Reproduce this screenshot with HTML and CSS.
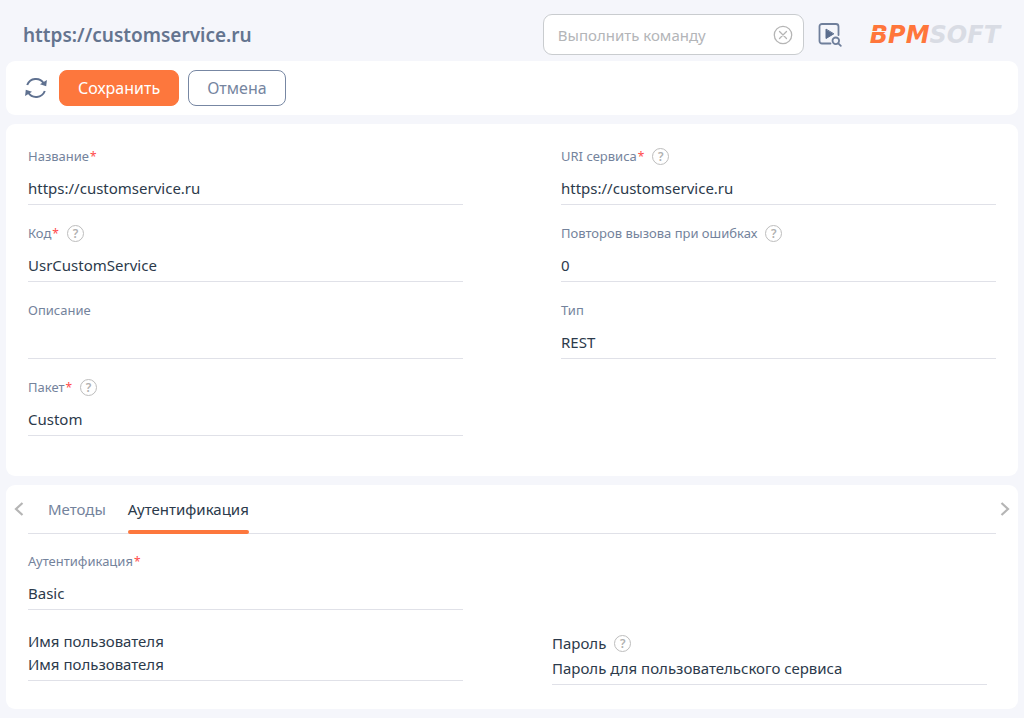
FILE: index.html
```html
<!DOCTYPE html>
<html lang="ru">
<head>
    <meta charset="UTF-8">
    <meta name="viewport" content="width=device-width, initial-scale=1.0">
    <title>https://customservice.ru</title>
    <link rel="stylesheet" href="styles.css">
</head>
<body>
    <header class="header">
        <h1 class="page-title">https://customservice.ru</h1>
        <div class="command">
            <input type="text" class="command-input" placeholder="Выполнить команду" aria-label="Выполнить команду">
            <button type="button" class="icon-button" aria-label="Очистить">
                <svg width="20" height="20" viewBox="0 0 20 20" fill="none" stroke="#b5b5b5" stroke-width="1.3" stroke-linecap="round">
                    <circle cx="10" cy="10" r="8.7"/>
                    <path d="M6.5 6.5l7 7M13.5 6.5l-7 7"/>
                </svg>
            </button>
        </div>
        <button type="button" class="icon-button run-button" aria-label="Запустить процесс">
            <svg width="24" height="24" viewBox="0 0 24 24" fill="none" stroke="#6f7f9b" stroke-width="1.8" stroke-linecap="round">
                <path d="M12.5 20.5H4A2.500 2.500 0 0 1 1.500 18V3.500A2.500 2.500 0 0 1 4 1H18a2.500 2.500 0 0 1 2.500 2.500V12"/>
                <path d="M8 6.500v9l7.500-4.500z" fill="#5b6d8d" stroke="#5b6d8d" stroke-width="1" stroke-linejoin="round"/>
                <circle cx="17.800" cy="17.800" r="3.300"/>
                <path d="M20.300 20.300l2.500 2.500"/>
            </svg>
        </button>
        <a href="#" class="logo"><span class="logo-bpm">BPM</span><span class="logo-soft">SOFT</span></a>
    </header>

    <main class="content">
        <div class="card toolbar">
            <button type="button" class="icon-button" aria-label="Обновить">
                <svg width="22" height="22" viewBox="0 0 22 22" fill="none" stroke="#5f7190" stroke-width="2">
                    <path d="M2.200 8A9.300 9.300 0 0 1 18.800 6.500"/>
                    <path d="M19.800 14A9.300 9.300 0 0 1 3.200 15.500"/>
                    <path d="M21.900 3l-.7 6.300-6.200-2z" fill="#5f7190" stroke="none"/>
                    <path d="M.1 19l.7-6.300 6.200 2z" fill="#5f7190" stroke="none"/>
                </svg>
            </button>
            <button type="button" class="btn btn-primary">Сохранить</button>
            <button type="button" class="btn">Отмена</button>
        </div>

        <section class="card main-card">
            <div class="fields">
                <div class="field">
                    <div class="field-head"><label for="name">Название<span class="required">*</span></label></div>
                    <input type="text" id="name" value="https://customservice.ru">
                </div>
                <div class="field">
                    <div class="field-head">
                        <label for="uri">URI сервиса<span class="required">*</span></label>
                        <button type="button" class="help" aria-label="Подсказка">?</button>
                    </div>
                    <input type="text" id="uri" value="https://customservice.ru">
                </div>
                <div class="field">
                    <div class="field-head">
                        <label for="code">Код<span class="required">*</span></label>
                        <button type="button" class="help" aria-label="Подсказка">?</button>
                    </div>
                    <input type="text" id="code" value="UsrCustomService">
                </div>
                <div class="field">
                    <div class="field-head">
                        <label for="retries">Повторов вызова при ошибках</label>
                        <button type="button" class="help" aria-label="Подсказка">?</button>
                    </div>
                    <input type="text" id="retries" value="0">
                </div>
                <div class="field">
                    <div class="field-head"><label for="description">Описание</label></div>
                    <input type="text" id="description">
                </div>
                <div class="field">
                    <div class="field-head"><label for="type">Тип</label></div>
                    <input type="text" id="type" value="REST">
                </div>
                <div class="field">
                    <div class="field-head">
                        <label for="package">Пакет<span class="required">*</span></label>
                        <button type="button" class="help" aria-label="Подсказка">?</button>
                    </div>
                    <input type="text" id="package" value="Custom">
                </div>
            </div>
        </section>

        <section class="card tabs-card">
            <nav class="tabs">
                <button type="button" class="icon-button tabs-arrow" aria-label="Назад">
                    <svg width="10" height="14" viewBox="0 0 10 14" fill="none" stroke="#b5b5b5" stroke-width="2.200"><path d="M8.500 1L2 7l6.500 6"/></svg>
                </button>
                <div class="tab-list">
                    <button type="button" class="tab">Методы</button>
                    <button type="button" class="tab active">Аутентификация</button>
                </div>
                <button type="button" class="icon-button tabs-arrow next" aria-label="Вперёд">
                    <svg width="10" height="14" viewBox="0 0 10 14" fill="none" stroke="#b5b5b5" stroke-width="2.200"><path d="M1.500 1L8 7l-6.500 6"/></svg>
                </button>
            </nav>
            <div class="fields auth-fields">
                <div class="field">
                    <div class="field-head"><label for="auth">Аутентификация<span class="required">*</span></label></div>
                    <input type="text" id="auth" value="Basic">
                </div>
            </div>
            <div class="fields credentials">
                <div class="field compact">
                    <div class="field-head"><label for="user">Имя пользователя</label></div>
                    <input type="text" id="user" value="Имя пользователя">
                </div>
                <div class="field compact password">
                    <div class="field-head">
                        <label for="password">Пароль</label>
                        <button type="button" class="help" aria-label="Подсказка">?</button>
                    </div>
                    <input type="text" id="password" value="Пароль для пользовательского сервиса">
                </div>
            </div>
        </section>
    </main>
</body>
</html>
```
FILE: styles.css
```css
* {
    box-sizing: border-box;
}

body {
    margin: 0;
    background: #f5f6fb;
    color: #2c3a4b;
    font-family: "Noto Sans", "Open Sans", sans-serif;
    font-size: 15px;
}

button, input {
    font-family: inherit;
    font-size: inherit;
    color: inherit;
}

button {
    cursor: pointer;
}

.header {
    display: flex;
    align-items: center;
    padding: 14px 24px 6px 23px;
}

.page-title {
    flex: 1;
    margin: 0;
    font-size: 19px;
    line-height: 28px;
    font-weight: 600;
    color: #64748f;
}

.command {
    display: flex;
    align-items: center;
    width: 261px;
    height: 41px;
    padding: 0 10px 0 14px;
    background: #fff;
    border: 1px solid #c9cccf;
    border-radius: 9px;
}

.command-input {
    flex: 1;
    min-width: 0;
    padding: 0;
    border: none;
    outline: none;
    background: none;
}

.command-input::placeholder {
    color: #b3b5b8;
    opacity: 1;
}

.icon-button {
    display: flex;
    align-items: center;
    justify-content: center;
    padding: 0;
    border: none;
    background: none;
}

.run-button {
    margin: 0 28px 0 14px;
}

.logo {
    position: relative;
    font-family: "DejaVu Sans", sans-serif;
    font-size: 24px;
    line-height: 24px;
    font-weight: bold;
    font-style: italic;
    text-decoration: none;
}

/* slit through the B */
.logo::after {
    content: "";
    position: absolute;
    left: 0;
    top: 8px;
    width: 16px;
    height: 1px;
    background: #f5f6fb;
}

.logo-bpm {
    color: #ff763b;
}

.logo-soft {
    color: #d9dce4;
}

.content {
    display: flex;
    flex-direction: column;
    gap: 9px;
    padding: 0 6px 9px;
}

.card {
    background: #fff;
    border-radius: 9px;
}

.toolbar {
    display: flex;
    align-items: center;
    gap: 9px;
    padding: 9px 19px;
}

.toolbar .icon-button {
    margin-right: 3px;
}

.btn {
    height: 36px;
    padding: 0 18px;
    background: #fff;
    border: 1px solid #7787a3;
    border-radius: 8px;
    color: #7585a0;
    font-size: 16px;
    line-height: 20px;
}

.btn-primary {
    background: #fd773d;
    border-color: #fd773d;
    color: #fff;
}

.main-card {
    padding: 20px 22px 40px;
}

.fields {
    display: grid;
    grid-template-columns: 1fr 1fr;
    gap: 16px 98px;
}

.field-head {
    display: flex;
    align-items: center;
    gap: 8px;
    height: 24px;
    margin-bottom: 4px;
    font-size: 13px;
    color: #74839c;
}

.required {
    margin-left: 1px;
    color: #ff4a4a;
    font-size: 12px;
}

.help {
    width: 17px;
    height: 17px;
    padding: 0;
    background: none;
    border: 1px solid #bdbdbd;
    border-radius: 50%;
    color: #b0b0b0;
    font-size: 12px;
    line-height: 15px;
    font-weight: 600;
}

.field input {
    display: block;
    width: 100%;
    height: 33px;
    padding: 0;
    border: none;
    border-bottom: 1px solid #e0e1e8;
    border-radius: 0;
    outline: none;
    background: none;
}

.tabs-card {
    padding-bottom: 24px;
}

.tabs {
    display: flex;
}

.tabs-arrow {
    width: 22px;
    height: 48px;
    padding-left: 4px;
}

.tabs-arrow.next {
    padding: 0 4px 0 0;
}

.tab-list {
    flex: 1;
    display: flex;
    gap: 22px;
    padding-left: 20px;
    border-bottom: 1px solid #e0e1e8;
}

.tab {
    position: relative;
    height: 48px;
    padding: 0;
    border: none;
    background: none;
    color: #74839c;
}

.tab.active {
    color: #2c3a4b;
}

.tab.active::after {
    content: "";
    position: absolute;
    left: 0;
    right: 0;
    bottom: -1px;
    height: 4px;
    border-radius: 2px;
    background: #fd773d;
}

.auth-fields {
    padding: 15px 22px 19px;
}

.credentials {
    column-gap: 89px;
    padding: 0 31px 0 22px;
}

.compact .field-head {
    margin: 0;
    font-size: 15px;
    color: #2c3a4b;
}

.compact input {
    height: 28px;
    padding-bottom: 5px;
}

.password .field-head {
    height: 28px;
}
```
